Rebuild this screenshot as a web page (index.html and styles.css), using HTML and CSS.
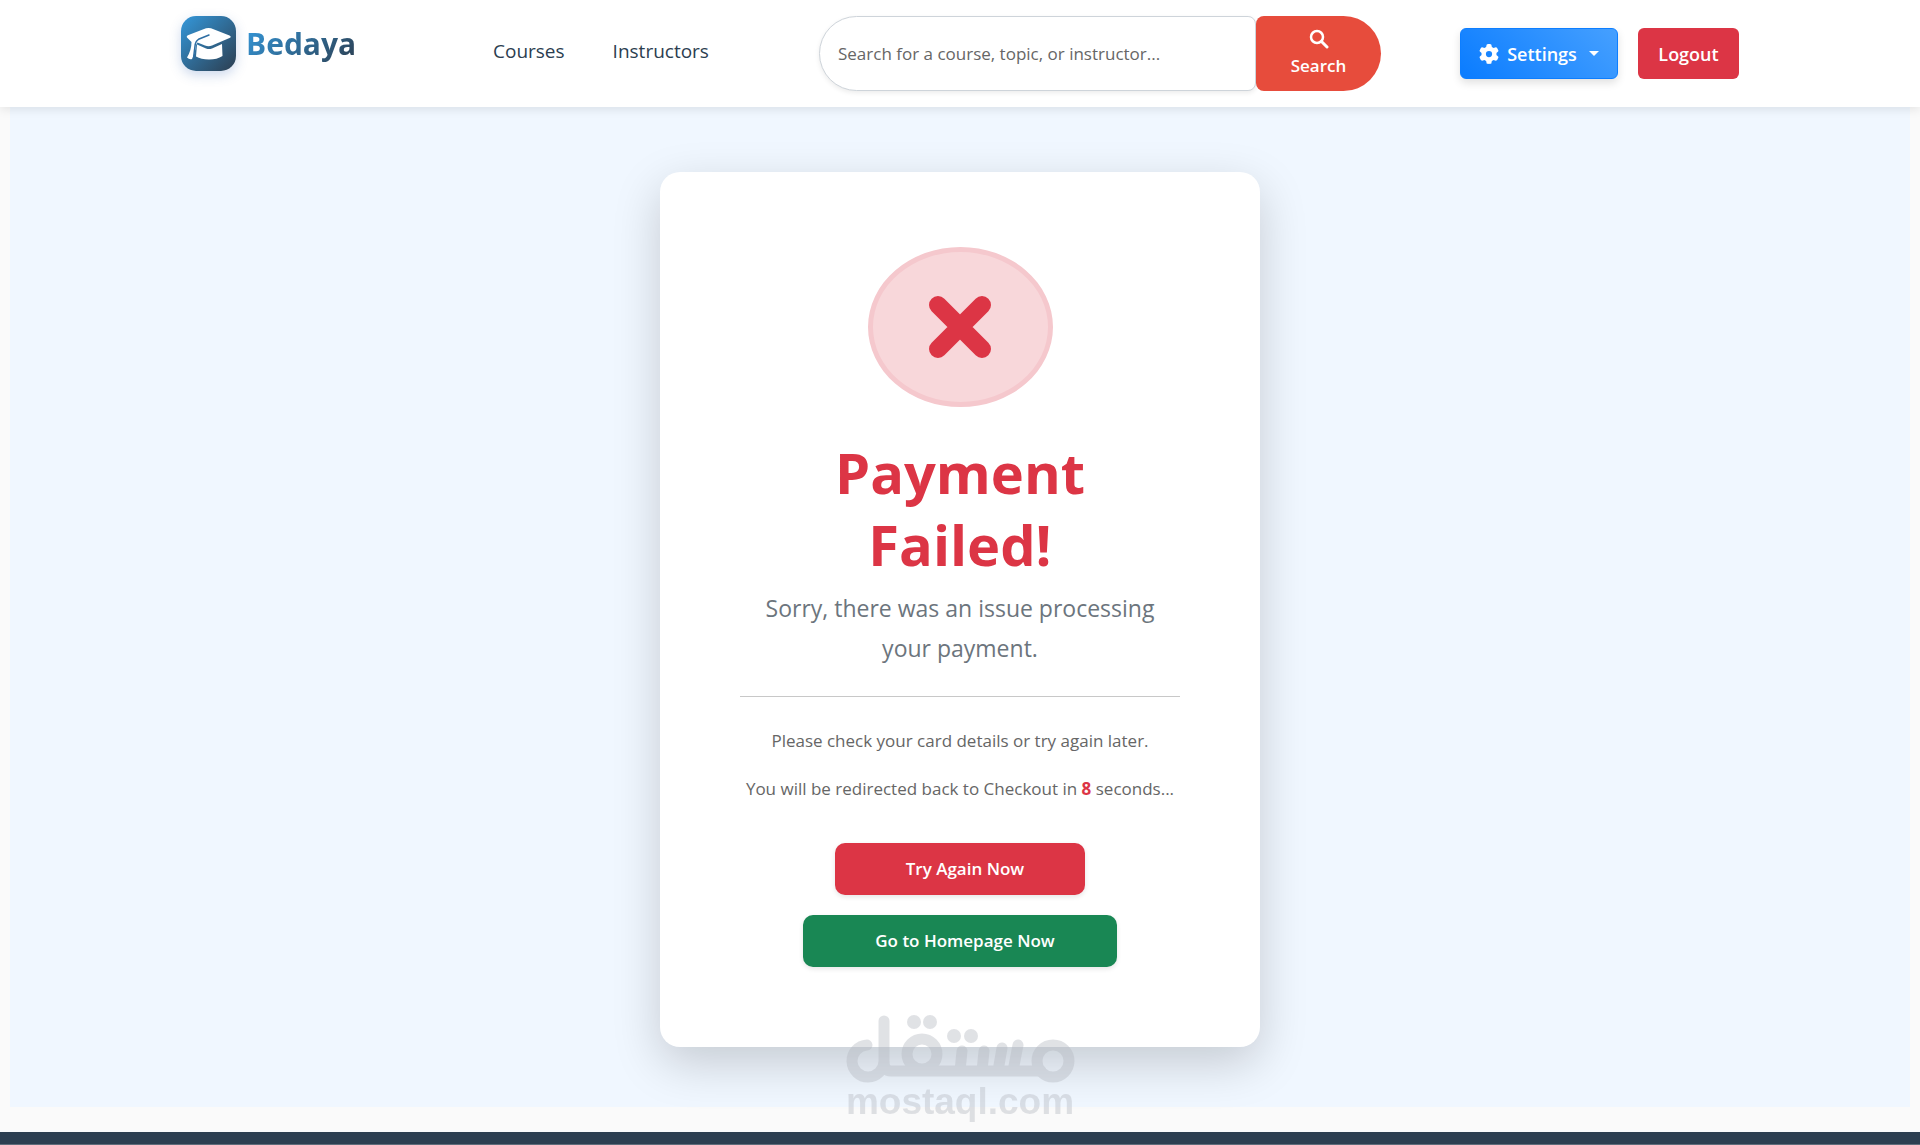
FILE: index.html
```html
<!DOCTYPE html>
<html lang="en">
<head>
<meta charset="utf-8">
<meta name="viewport" content="width=device-width, initial-scale=1">
<title>Bedaya - Payment Failed</title>
<link rel="stylesheet" href="styles.css">
</head>
<body>
<header class="navbar">
  <div class="navbar-inner">
    <a class="brand" href="#">
      <span class="brand-mark">
        <svg viewBox="0 0 55 55" width="55" height="55" aria-hidden="true">
          <path d="M6 21.500 Q5 20 7.500 19 L25 12.300 Q27.500 11.500 30 12.300 L48.500 19.500 Q51 20.800 48.500 22 L31 29.500 Q27.500 31 24 29.500 L16.500 26.500 L15 29 Q14 38 11 43 Q8.500 44 6 41.500 Q10.500 34 10.500 26 Z" fill="#fff"/>
          <path d="M16 28.500 L25 32.500 Q28 33.500 31 32.500 L41 28 L41.500 40 Q36 43.500 28 43.500 Q20 43.500 15 40.500 Z" fill="#fff"/>
          <path d="M28 19 L17.500 23.300 Q14.500 25 14 30 L12.500 42" fill="none" stroke="#2e6ea3" stroke-width="1.500" stroke-linecap="round"/>
        </svg>
      </span>
      <span class="brand-name">Bedaya</span>
    </a>
    <nav class="nav-links">
      <a href="#">Courses</a>
      <a href="#">Instructors</a>
    </nav>
    <form class="search" role="search">
      <input class="search-input" type="search" aria-label="Search" placeholder="Search for a course, topic, or instructor...">
      <button class="search-button" type="button">
        <svg viewBox="0 0 20 20" width="20" height="20" aria-hidden="true"><circle cx="8" cy="8" r="6" fill="none" stroke="currentColor" stroke-width="2.500"/><path d="M12.500 12.500 L18 18" stroke="currentColor" stroke-width="3" stroke-linecap="round"/></svg>
        <span>Search</span>
      </button>
    </form>
    <div class="actions">
      <button class="btn btn-settings" type="button">
        <svg viewBox="0 0 512 512" width="20" height="20" aria-hidden="true"><path fill="currentColor" d="M495.900 166.600c3.200 8.700.5 18.400-6.400 24.600l-43.300 39.400c1.100 8.300 1.700 16.800 1.700 25.400s-.6 17.100-1.700 25.400l43.300 39.400c6.900 6.200 9.600 15.900 6.400 24.600-4.400 11.900-9.700 23.300-15.800 34.300l-4.700 8.100c-6.600 11-14 21.400-22.100 31.200-5.900 7.200-15.700 9.600-24.500 6.800l-55.700-17.700c-13.400 10.300-28.200 18.900-44 25.400l-12.500 57.100c-2 9.100-9 16.300-18.200 17.800-13.800 2.300-28 3.500-42.500 3.500s-28.700-1.200-42.500-3.500c-9.200-1.500-16.200-8.700-18.200-17.800l-12.500-57.100c-15.800-6.500-30.600-15.100-44-25.400l-55.600 17.800c-8.800 2.800-18.600.3-24.500-6.800-8.100-9.800-15.500-20.200-22.100-31.200l-4.700-8.100c-6.100-11-11.400-22.400-15.800-34.300-3.200-8.700-.5-18.400 6.400-24.600l43.300-39.400C64.600 273.100 64 264.600 64 256s.6-17.100 1.700-25.400l-43.300-39.400c-6.900-6.200-9.600-15.900-6.400-24.600 4.400-11.900 9.700-23.300 15.800-34.300l4.700-8.100c6.600-11 14-21.400 22.100-31.200 5.900-7.200 15.700-9.600 24.500-6.800l55.700 17.700c13.400-10.300 28.200-18.900 44-25.400l12.500-57.100c2-9.100 9-16.300 18.200-17.800C227.300 1.200 241.500 0 256 0s28.700 1.200 42.500 3.500c9.200 1.500 16.200 8.700 18.200 17.800l12.500 57.100c15.800 6.500 30.600 15.100 44 25.400l55.700-17.700c8.800-2.800 18.600-.3 24.500 6.800 8.100 9.800 15.500 20.200 22.100 31.200l4.700 8.100c6.100 11 11.400 22.400 15.700 34.400zM256 336a80 80 0 1 0 0-160 80 80 0 1 0 0 160z"/></svg>
        <span>Settings</span>
        <span class="caret"></span>
      </button>
      <button class="btn btn-logout" type="button">Logout</button>
    </div>
  </div>
</header>

<main class="page">
  <section class="card">
    <div class="status">
      <svg viewBox="0 0 62 62" width="62" height="62" aria-hidden="true"><path d="M9 9 L53 53 M53 9 L9 53" stroke="currentColor" stroke-width="18" stroke-linecap="round"/></svg>
    </div>
    <h1 class="title">Payment Failed!</h1>
    <p class="lead">Sorry, there was an issue processing your payment.</p>
    <hr class="rule">
    <p class="note">Please check your card details or try again later.</p>
    <p class="note">You will be redirected back to Checkout in <strong>8</strong> seconds...</p>
    <div class="card-actions">
      <a class="action action-retry" href="#">Try Again Now</a>
      <a class="action action-home" href="#">Go to Homepage Now</a>
    </div>
  </section>
  <div class="watermark">
    <svg viewBox="0 0 230 68" width="230" height="68" role="img" aria-label="mostaql">
      <g fill="none" stroke="#b4b8c0" stroke-width="11" stroke-linecap="round" stroke-linejoin="round">
        <circle cx="208" cy="46" r="16"/>
        <circle cx="77" cy="39" r="15"/>
        <path d="M22 30 A16 16 0 1 0 39 46 V6 M39 46 Q39 56 46 56 H196 M117 36 L115 56 M139 36 L137 56 M157 33 L153 56 M173 30 L168 56"/>
      </g>
      <g fill="#b4b8c0"><circle cx="69" cy="7" r="7"/><circle cx="85" cy="7" r="7"/><circle cx="109" cy="21" r="7"/><circle cx="126" cy="21" r="7"/></g>
    </svg>
    <span class="watermark-text">mostaql.com</span>
  </div>
</main>
<footer class="footer"></footer>
</body>
</html>
```
FILE: styles.css
```css
* { box-sizing: border-box; }

body {
  margin: 0;
  background: #fafafa;
  color: #2c3e50;
  font-family: "Open Sans", "Noto Sans", sans-serif;
  font-size: 17px;
}

a { text-decoration: none; }
button, input { font: inherit; }

.navbar {
  position: relative;
  z-index: 1;
  padding: 16px 24px;
  background: #fff;
  box-shadow: 0 2px 10px rgba(0, 0, 0, 0.1);
}

.navbar-inner {
  display: grid;
  grid-template-columns: 312fr 326fr 641fr 279px;
  align-items: center;
  max-width: 1558px;
  min-height: 75px;
  margin: 0 auto;
}

.brand {
  display: flex;
  align-self: start;
  align-items: center;
  gap: 10px;
}

.brand-mark {
  display: flex;
  border-radius: 15px;
  background: linear-gradient(135deg, #3498db, #2c3e50);
  box-shadow: 0 4px 12px rgba(52, 100, 180, 0.25);
}

.brand-name {
  background: linear-gradient(135deg, #3498db, #2c3e50);
  background-clip: text;
  color: transparent;
  font-size: 30px;
  font-weight: 700;
  line-height: 40px;
}

.nav-links {
  display: flex;
  gap: 48px;
  padding-bottom: 6px;
}

.nav-links a {
  color: #2c3e50;
  font-size: 19px;
  font-weight: 500;
}

.search {
  display: flex;
  width: 100%;
  max-width: 562px;
  height: 75px;
}

.search-input {
  flex: 1;
  min-width: 0;
  padding: 0 18px;
  border: 1px solid #ced4da;
  border-radius: 38px 8px 8px 38px;
  background: #fff;
  box-shadow: 0 2px 5px rgba(0, 0, 0, 0.08);
  font-size: 17px;
}

.search-input::placeholder { color: #666; opacity: 1; }

.search-button {
  display: flex;
  flex-direction: column;
  align-items: center;
  justify-content: center;
  gap: 4px;
  width: 125px;
  border: 0;
  border-radius: 8px 38px 38px 8px;
  background: #e74c3c;
  color: #fff;
  font-weight: 600;
  line-height: 26px;
}

.actions {
  display: flex;
  justify-content: space-between;
}

.btn {
  display: flex;
  align-items: center;
  justify-content: center;
  height: 51px;
  border: 0;
  border-radius: 6px;
  color: #fff;
  font-size: 18px;
  font-weight: 600;
}

.btn-settings {
  gap: 8px;
  width: 158px;
  border: 1px solid #0d7eff;
  background: linear-gradient(45deg, #0a7cff, #46a0ff);
  box-shadow: 0 4px 8px rgba(0, 0, 0, 0.12);
}

.btn-logout {
  width: 101px;
  background: #dc3545;
}

.caret {
  margin-left: 4px;
  border: 5px solid transparent;
  border-top-color: #fff;
  border-bottom: 0;
}

.page {
  position: relative;
  margin: 0 10px 25px;
  padding: 65px 16px 60px;
  background: #f0f7ff;
}

.card {
  max-width: 600px;
  margin: 0 auto;
  padding: 75px 80px 80px;
  border-radius: 20px;
  background: #fff;
  box-shadow: 0 16px 48px rgba(0, 0, 0, 0.18);
  text-align: center;
}

.status {
  display: flex;
  align-items: center;
  justify-content: center;
  width: 185px;
  height: 160px;
  margin: 0 auto 29px;
  border: 5px solid #f5c8cd;
  border-radius: 50%;
  background: #f8d7da;
  color: #dc3545;
}

.title {
  max-width: 320px;
  margin: 0 auto 8px;
  color: #dc3545;
  font-size: 56px;
  font-weight: 700;
  line-height: 72px;
}

.lead {
  margin: 0;
  color: #6c757d;
  font-size: 23px;
  line-height: 40px;
}

.rule {
  margin: 28px 0 30px;
  border: 0;
  border-top: 1px solid #c8c8c8;
}

.note {
  margin: 0 0 20px;
  color: #666;
  font-size: 17px;
  line-height: 28px;
}

.note strong { color: #dc3545; }

.card-actions {
  display: flex;
  flex-direction: column;
  align-items: center;
  gap: 20px;
  margin-top: 40px;
}

.action {
  max-width: 100%;
  padding-left: 10px;
  border-radius: 10px;
  box-shadow: 0 2px 5px rgba(0, 0, 0, 0.1);
  color: #fff;
  font-size: 17px;
  font-weight: 600;
  line-height: 52px;
}

.action-retry { width: 250px; background: #dc3545; }
.action-home { width: 314px; background: #198754; }

.watermark {
  position: absolute;
  bottom: -14px;
  left: 50%;
  display: flex;
  flex-direction: column;
  align-items: center;
  width: 230px;
  margin-left: -115px;
  opacity: 0.4;
  pointer-events: none;
}

.watermark-text {
  color: #b4b8c0;
  font-family: "Liberation Sans", sans-serif;
  font-size: 37px;
  font-weight: 700;
  line-height: 38px;
}

.footer {
  height: 13px;
  border-bottom: 1px solid #5f6c7a;
  background: #2c3e50;
}
```
